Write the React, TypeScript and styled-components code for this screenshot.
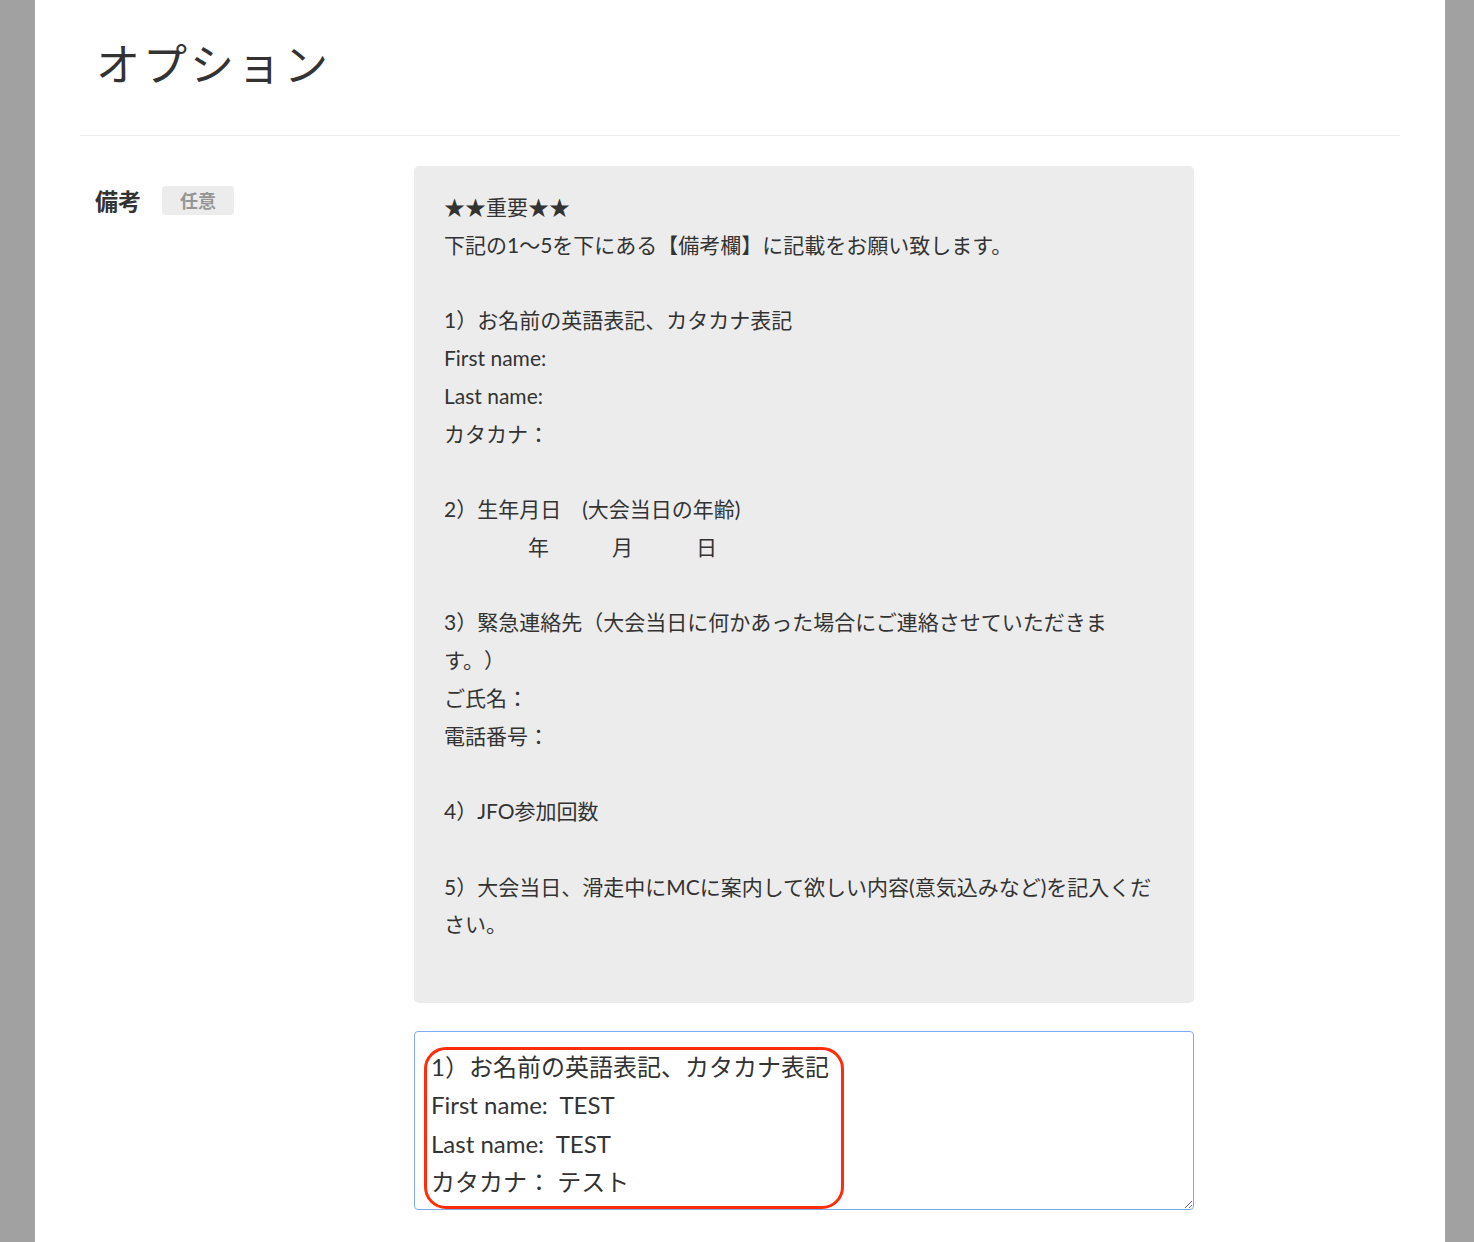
import styled, { createGlobalStyle } from 'styled-components'

const GlobalStyle = createGlobalStyle`
  html, body {
    margin: 0;
    padding: 0;
    background: #a0a1a0;
  }
  body {
    font-family: 'Lato', 'Noto Sans CJK JP', sans-serif;
    color: #333;
    text-spacing-trim: space-all;
  }
`

const Sheet = styled.main`
  width: 1410px;
  min-height: 1242px;
  margin-left: 35px;
  padding: 0 45px;
  box-sizing: border-box;
  background: #fff;
`

const Header = styled.header`
  height: 136px;
  box-sizing: border-box;
  padding: 34px 16px 0;
  border-bottom: 1px solid #ebebeb;
`

const Title = styled.h1`
  margin: 0;
  font-size: 44px;
  font-weight: 400;
  line-height: 1.4;
  letter-spacing: 3px;
  color: #333;
`

const FieldRow = styled.section`
  display: grid;
  grid-template-columns: 334px 780px;
  margin-top: 30px;
`

const LabelCell = styled.div`
  display: flex;
  align-items: center;
  gap: 21px;
  padding: 17px 0 0 15px;
  align-self: start;
`

const Label = styled.span`
  font-size: 23px;
  font-weight: 700;
  color: #333;
`

const Badge = styled.span`
  display: inline-flex;
  align-items: center;
  height: 29px;
  padding: 0 18px;
  border-radius: 4px;
  background: #ececec;
  color: #959595;
  font-size: 18px;
  font-weight: 700;
`

const InputCell = styled.div`
  display: flex;
  flex-direction: column;
  gap: 28px;
`

const Notice = styled.div`
  background: #ececec;
  border-radius: 5px;
  padding: 22px 30px;
  font-size: 21px;
  line-height: 37.75px;
  color: #333;
  text-spacing-trim: space-all;
`

const NoticeLine = styled.div`
  min-height: 37.75px;
`

const TextareaWrap = styled.div`
  position: relative;
  width: 780px;
  height: 179px;
`

const Memo = styled.textarea`
  width: 100%;
  height: 100%;
  box-sizing: border-box;
  padding: 16px;
  border: 1px solid #7cabf3;
  border-radius: 4px;
  font-family: 'Lato', 'Noto Sans CJK JP', sans-serif;
  font-size: 24px;
  line-height: 38.4px;
  color: #333;
  resize: vertical;
  outline: none;
  overflow: hidden;
`

const Highlight = styled.div`
  position: absolute;
  left: 10px;
  top: 16px;
  width: 420px;
  height: 162px;
  box-sizing: border-box;
  border: 3px solid #ff2d0a;
  border-radius: 22px;
  pointer-events: none;
`

const notice = [
  '★★重要★★',
  '下記の1〜5を下にある【備考欄】に記載をお願い致します。',
  '',
  '1）お名前の英語表記、カタカナ表記',
  'First name:',
  'Last name:',
  'カタカナ：',
  '',
  '2）生年月日　(大会当日の年齢)',
  '　　　　年　　　月　　　日',
  '',
  '3）緊急連絡先（大会当日に何かあった場合にご連絡させていただきます。）',
  'ご氏名：',
  '電話番号：',
  '',
  '4）JFO参加回数',
  '',
  '5）大会当日、滑走中にMCに案内して欲しい内容(意気込みなど)を記入ください。',
  '',
]

const memoValue =
  '1）お名前の英語表記、カタカナ表記\nFirst name:  TEST\nLast name:  TEST\nカタカナ： テスト'

const App = () => {
  return (
    <>
      <GlobalStyle />
      <Sheet>
        <Header>
          <Title>オプション</Title>
        </Header>
        <FieldRow>
          <LabelCell>
            <Label>備考</Label>
            <Badge>任意</Badge>
          </LabelCell>
          <InputCell>
            <Notice>
              {notice.map((line, i) => (
                <NoticeLine key={i}>{line}</NoticeLine>
              ))}
            </Notice>
            <TextareaWrap>
              <Memo defaultValue={memoValue} />
              <Highlight />
            </TextareaWrap>
          </InputCell>
        </FieldRow>
      </Sheet>
    </>
  )
}

export default App
